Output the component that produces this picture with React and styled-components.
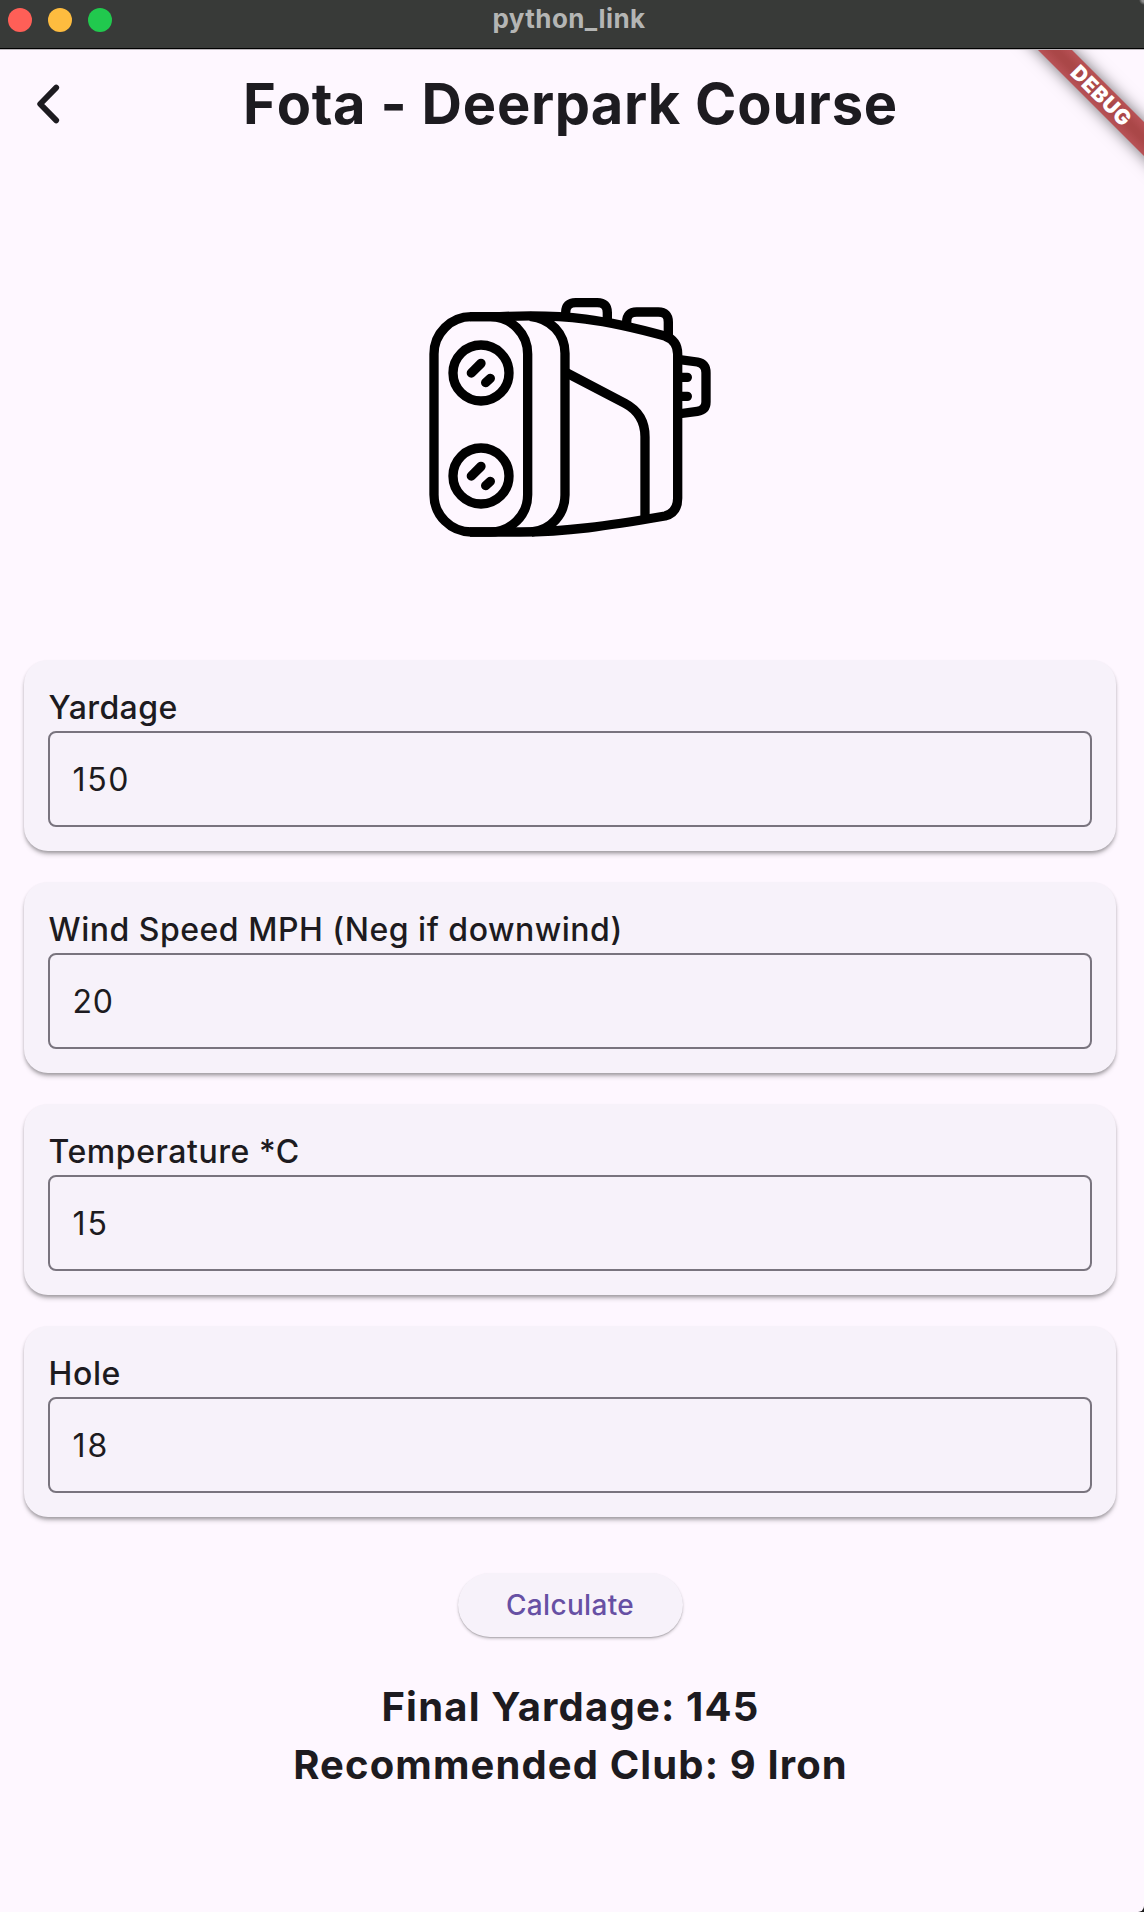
import React from "react";
import styled, { createGlobalStyle } from "styled-components";

const GlobalStyle = createGlobalStyle`
  *, *::before, *::after { box-sizing: border-box; }
  body {
    margin: 0;
    background: #1a1a1a;
    font-family: Inter, "Liberation Sans", sans-serif;
    color: #1d1b20;
  }
`;

const Window = styled.div`
  display: flex;
  flex-direction: column;
  width: 1144px;
  height: 1912px;
  overflow: hidden;
  background: #fef7ff;
  border-radius: 0 0 6px 0;
`;

const TitleBar = styled.header`
  display: grid;
  grid-template-columns: 1fr auto 1fr;
  align-items: start;
  flex: none;
  height: 49px;
  padding: 0 6px 0 0;
  border-bottom: 1px solid #000;
  background: radial-gradient(circle at 100% 0, #8c8c8c 0 2px, transparent 5px), #383a38;
`;

const TrafficLights = styled.div`
  display: flex;
  gap: 16px;
  padding: 8px;
`;

const Light = styled.span`
  width: 24px;
  height: 24px;
  border-radius: 50%;
  background: ${(p) => p.$color};
`;

const WindowTitle = styled.span`
  font-size: 26px;
  font-weight: 700;
  line-height: 37px;
  letter-spacing: 0.42px;
  color: #b4b5b4;
`;

const Screen = styled.div`
  position: relative;
  display: flex;
  flex-direction: column;
  flex: 1;
  overflow: hidden;
  padding-right: 4px;
  border-top: 1px solid #bdb8bd;
`;

const AppBar = styled.div`
  display: grid;
  grid-template-columns: 96px 1fr 96px;
  align-items: center;
  height: 108px;
`;

const BackButton = styled.button`
  display: flex;
  justify-content: center;
  padding: 0;
  border: 0;
  background: none;
  color: inherit;
`;

const PageTitle = styled.h1`
  margin: 0;
  padding-left: 1px;
  text-align: center;
  font-size: 56px;
  font-weight: 700;
  line-height: 68px;
  letter-spacing: 0.8px;
  font-kerning: none;
`;

const Hero = styled.div`
  display: flex;
  justify-content: center;
  height: 502px;
  padding-top: 122px;
`;

const Form = styled.form`
  display: flex;
  flex-direction: column;
  gap: 31px;
  padding: 0 24px;
`;

const Card = styled.label`
  display: flex;
  flex-direction: column;
  height: 191px;
  padding: 24px;
  border-radius: 24px;
  background: #f7f2fa;
  box-shadow: 0 4px 5px -1px rgba(0, 0, 0, 0.26), 0 2px 3px rgba(0, 0, 0, 0.16);
`;

const FieldLabel = styled.span`
  padding-left: 0.6px;
  font-size: 32px;
  font-weight: 500;
  line-height: 47px;
  letter-spacing: ${(p) => p.$tracking}px;
`;

const FieldInput = styled.input`
  width: 100%;
  height: 96px;
  padding: 1px 22.5px 0;
  border: 2px solid #79747e;
  border-radius: 8px;
  outline: 0;
  background: transparent;
  font: 400 32px Inter, "Liberation Sans", sans-serif;
  letter-spacing: ${(p) => p.$tracking}px;
  color: #1d1b20;
`;

const Actions = styled.div`
  display: flex;
  flex-direction: column;
  align-items: center;
  padding-top: 56px;
`;

const CalculateButton = styled.button`
  width: 225px;
  height: 64px;
  padding: 0;
  border: 0;
  border-radius: 32px;
  background: #f7f2fa;
  box-shadow: 0 2px 3px rgba(0, 0, 0, 0.18), 0 1px 1px rgba(0, 0, 0, 0.16);
  font: 500 28px Inter, "Liberation Sans", sans-serif;
  letter-spacing: 0.33px;
  color: #6750a4;
`;

const Results = styled.div`
  padding: 41px 0 0 1px;
  text-align: center;
`;

const ResultLine = styled.p`
  margin: 0;
  font-size: 40px;
  font-weight: 700;
  line-height: 58px;
  letter-spacing: ${(p) => p.$tracking}px;
`;

const DebugBanner = styled.div`
  position: absolute;
  top: 34px;
  left: 997px;
  width: 208px;
  height: 24px;
  transform: rotate(45deg);
  background: linear-gradient(#b85256, #aa4748 40%, #aa4748 60%, #b85256);
  box-shadow: 0 0 16px rgba(0, 0, 0, 0.55);
  text-align: center;
  font-size: 21px;
  font-weight: 900;
  line-height: 24px;
  letter-spacing: 0.6px;
  color: #fff;
`;

function BackIcon() {
  return (
    <svg width="26" height="42" viewBox="0 0 26 42" fill="none">
      <path
        d="M21.2 4.6 5.2 21l16 16.4"
        stroke="currentColor"
        strokeWidth="5.8"
        strokeLinecap="round"
        strokeLinejoin="round"
      />
    </svg>
  );
}

function Lens({ y }) {
  return (
    <g transform={`translate(183 ${y})`}>
      <circle r="84" />
      <path d="M-29 0 0-29M14 29 28 16" strokeLinecap="round" />
    </g>
  );
}

function RangefinderIcon() {
  return (
    <svg width="300" height="270" viewBox="0 0 900 810" fill="none" stroke="#000" strokeWidth="28">
      <rect x="42" y="110" width="281" height="646" rx="112" ry="112" />
      <path d="M330 109C392 116 435 160 435 220V645C435 702 394 750 335 756" />
      <path d="M150 110H240C440 100 560 120 735 168Q773 182 773 222V655Q773 698 735 708C560 738 440 756 300 756H150" />
      <path d="M437 108V98Q437 68 467 68H532Q562 68 562 98V124" />
      <path d="M620 134V126Q620 96 650 96H715Q745 96 745 126V170" />
      <path d="M773 238 832 246Q858 251 858 278V366Q858 390 832 394L773 402" />
      <path d="M773 292H802M773 349H802" strokeLinecap="round" />
      <path d="M435 276 615 370Q675 402 675 470V715" />
      <Lens y={279} />
      <Lens y={588} />
    </svg>
  );
}

const fields = [
  { label: "Yardage", value: "150", tracking: 0.4, valueTracking: 1.7 },
  { label: "Wind Speed MPH (Neg if downwind)", value: "20", tracking: 0.5, valueTracking: 0.8 },
  { label: "Temperature *C", value: "15", tracking: 0.54, valueTracking: 2 },
  { label: "Hole", value: "18", tracking: 0.6, valueTracking: 2 },
];

export default function App() {
  return (
    <>
      <GlobalStyle />
      <Window>
        <TitleBar>
          <TrafficLights>
            <Light $color="#ff5f57" />
            <Light $color="#febc3f" />
            <Light $color="#21c94e" />
          </TrafficLights>
          <WindowTitle>python_link</WindowTitle>
        </TitleBar>
        <Screen>
          <AppBar>
            <BackButton type="button" aria-label="Back">
              <BackIcon />
            </BackButton>
            <PageTitle>Fota - Deerpark Course</PageTitle>
          </AppBar>
          <Hero>
            <RangefinderIcon />
          </Hero>
          <Form>
            {fields.map((field) => (
              <Card key={field.label}>
                <FieldLabel $tracking={field.tracking}>{field.label}</FieldLabel>
                <FieldInput defaultValue={field.value} $tracking={field.valueTracking} />
              </Card>
            ))}
          </Form>
          <Actions>
            <CalculateButton type="button">Calculate</CalculateButton>
            <Results>
              <ResultLine $tracking={1.19}>Final Yardage: 145</ResultLine>
              <ResultLine $tracking={1.11}>Recommended Club: 9 Iron</ResultLine>
            </Results>
          </Actions>
          <DebugBanner>DEBUG</DebugBanner>
        </Screen>
      </Window>
    </>
  );
}
